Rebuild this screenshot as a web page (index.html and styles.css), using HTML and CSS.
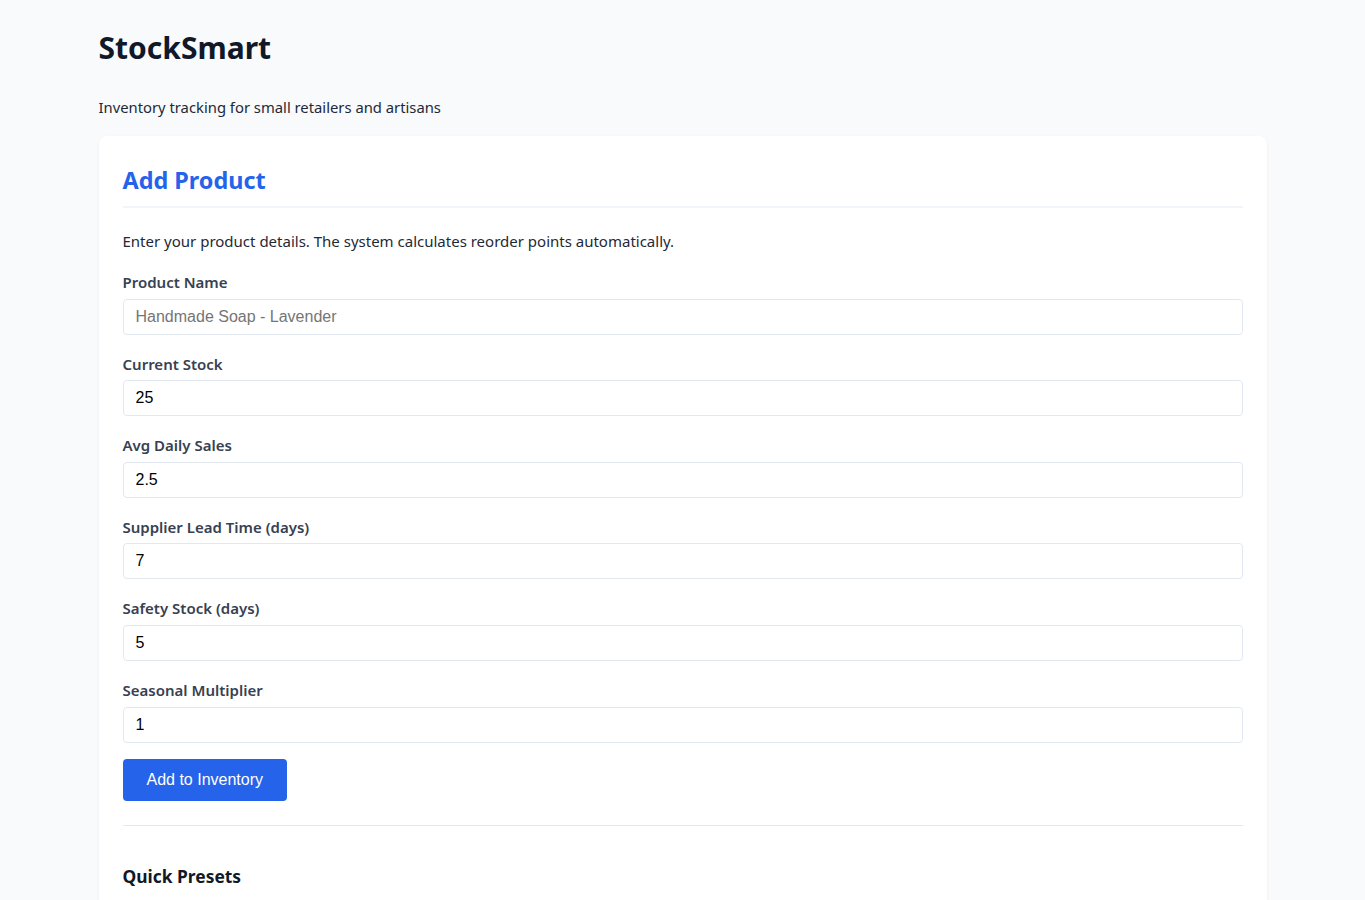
FILE: index.html
```
<!DOCTYPE html>
<html>
<head>
    <meta charset="utf-8">
    <title>StockSmart</title>
    <link rel="stylesheet" href="styles.css">
</head>
<body>
<div class="page">
    <header class="page-header">
        <h1>StockSmart</h1>
        <p class="tagline">Inventory tracking for small retailers and artisans</p>
    </header>

    <section class="card">
        <h2>Add Product</h2>
        <p class="intro">Enter your product details. The system calculates reorder points automatically.</p>

        <form class="product-form" onsubmit="return false">
            <div class="field">
                <label for="name">Product Name</label>
                <input type="text" id="name" placeholder="Handmade Soap - Lavender">
            </div>
            <div class="field">
                <label for="stock">Current Stock</label>
                <input type="number" id="stock" value="25">
            </div>
            <div class="field">
                <label for="sales">Avg Daily Sales</label>
                <input type="number" id="sales" value="2.5" step="0.1">
            </div>
            <div class="field">
                <label for="lead">Supplier Lead Time (days)</label>
                <input type="number" id="lead" value="7">
            </div>
            <div class="field">
                <label for="safety">Safety Stock (days)</label>
                <input type="number" id="safety" value="5">
            </div>
            <div class="field">
                <label for="season">Seasonal Multiplier</label>
                <input type="number" id="season" value="1" step="0.1">
            </div>
            <button type="submit" class="btn-primary">Add to Inventory</button>
        </form>

        <div class="presets">
            <h3>Quick Presets</h3>
            <div class="preset-list">
                <button class="preset">Candles</button>
                <button class="preset">Jewelry</button>
                <button class="preset">Pottery</button>
                <button class="preset">Prints</button>
            </div>
        </div>
    </section>
</div>
</body>
</html>
```
FILE: styles.css
```
body {
    margin: 0;
    background: #f8fafc;
    color: #1f2937;
    font-family: "Noto Sans", sans-serif;
}
.page {
    max-width: 1200px;
    margin: 0 auto;
    padding: 29px 16px 40px;
    box-sizing: border-box;
}
.page-header h1 {
    margin: 0;
    font-size: 30px;
    line-height: 38px;
    font-weight: 700;
    color: #111827;
}
.page-header .tagline {
    margin: 29px 0 18px;
    font-size: 14.8px;
    line-height: 22px;
}
.card {
    background: #ffffff;
    border-radius: 8px;
    box-shadow: 0 1px 3px rgba(15, 23, 42, 0.06);
    padding: 24px;
}
.card h2 {
    margin: 4px 0 0;
    padding-bottom: 10px;
    border-bottom: 2px solid #f1f5f9;
    font-size: 23.4px;
    line-height: 32px;
    color: #2563eb;
}
.intro {
    margin: 22px 0 21px;
    font-size: 15px;
    line-height: 22px;
}
.field + .field {
    margin-top: 20px;
}
.field label {
    display: block;
    margin-bottom: 6px;
    font-size: 15px;
    line-height: 19.6px;
    font-weight: 600;
    color: #374151;
}
.field input {
    display: block;
    width: 100%;
    box-sizing: border-box;
    padding: 8px 12px;
    border: 1px solid #e2e8f0;
    border-radius: 4px;
    font-family: "Liberation Sans", Arial, sans-serif;
    font-size: 16px;
    line-height: 18px;
    color: #000000;
    background: #ffffff;
}
.field input::placeholder {
    color: #757575;
}
.field input::-webkit-outer-spin-button,
.field input::-webkit-inner-spin-button {
    -webkit-appearance: none;
    margin: 0;
}
.btn-primary {
    margin-top: 16px;
    padding: 12px 24px;
    border: 0;
    border-radius: 4px;
    background: #2563eb;
    color: #ffffff;
    font-family: "Liberation Sans", Arial, sans-serif;
    font-size: 16px;
    line-height: 18px;
    cursor: pointer;
}
.presets {
    margin-top: 24px;
    padding-top: 38px;
    border-top: 1px solid #e5e7eb;
}
.presets h3 {
    margin: 0 0 16px;
    font-size: 17.4px;
    line-height: 24px;
    color: #111827;
}
.preset-list {
    display: flex;
    gap: 8px;
}
.preset {
    padding: 8px 14px;
    border: 1px solid #e2e8f0;
    border-radius: 4px;
    background: #f8fafc;
    font-family: "Liberation Sans", Arial, sans-serif;
    font-size: 14px;
}
```
